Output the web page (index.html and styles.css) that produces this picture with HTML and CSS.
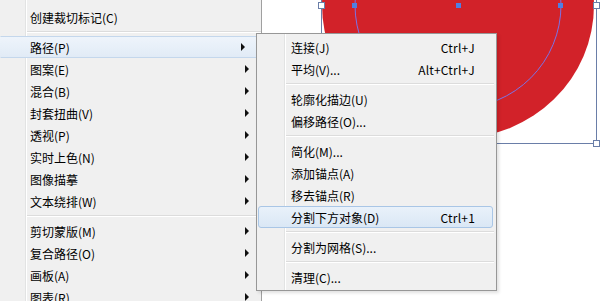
FILE: index.html
```html
<!DOCTYPE html>
<html lang="zh-CN">

<head>
    <meta charset="UTF-8">
    <meta name="viewport" content="width=device-width, initial-scale=1.0">
    <title>对象菜单</title>
    <link rel="stylesheet" href="styles.css">
</head>

<body>
    <svg class="artboard" width="600" height="301" viewBox="0 0 600 301">
        <ellipse cx="458" cy="5" rx="136" ry="133" fill="#d22229" />
        <circle cx="458" cy="5" r="103" fill="none" stroke="#7b73e6" stroke-width="1" />
        <rect x="321.5" y="-140" width="275" height="283.5" fill="none" stroke="#6a7ea8" stroke-width="1" />
        <rect x="318.5" y="2.5" width="6" height="6" fill="#fff" stroke="#6a7ea8" />
        <rect x="593.5" y="2.5" width="6" height="6" fill="#fff" stroke="#6a7ea8" />
        <rect x="593.5" y="140.5" width="6" height="6" fill="#fff" stroke="#6a7ea8" />
        <rect x="352" y="3" width="5" height="5" fill="#4f7fe3" />
        <rect x="456" y="3" width="5" height="5" fill="#4f7fe3" />
        <rect x="558" y="3" width="5" height="5" fill="#4f7fe3" />
    </svg>

    <div class="menu main-menu">
        <div class="item"><span>创建裁切标记(C)</span></div>
        <div class="sep"></div>
        <div class="item hover"><span>路径(P)</span><i class="arrow"></i></div>
        <div class="item"><span>图案(E)</span><i class="arrow"></i></div>
        <div class="item"><span>混合(B)</span><i class="arrow"></i></div>
        <div class="item"><span>封套扭曲(V)</span><i class="arrow"></i></div>
        <div class="item"><span>透视(P)</span><i class="arrow"></i></div>
        <div class="item"><span>实时上色(N)</span><i class="arrow"></i></div>
        <div class="item"><span>图像描摹</span><i class="arrow"></i></div>
        <div class="item"><span>文本绕排(W)</span><i class="arrow"></i></div>
        <div class="sep"></div>
        <div class="item"><span>剪切蒙版(M)</span><i class="arrow"></i></div>
        <div class="item"><span>复合路径(O)</span><i class="arrow"></i></div>
        <div class="item"><span>画板(A)</span><i class="arrow"></i></div>
        <div class="item"><span>图表(R)</span><i class="arrow"></i></div>
    </div>

    <div class="menu sub-menu">
        <div class="item"><span>连接(J)</span><span class="key">Ctrl+J</span></div>
        <div class="item"><span>平均(V)...</span><span class="key">Alt+Ctrl+J</span></div>
        <div class="sep"></div>
        <div class="item"><span>轮廓化描边(U)</span></div>
        <div class="item"><span>偏移路径(O)...</span></div>
        <div class="sep"></div>
        <div class="item"><span>简化(M)...</span></div>
        <div class="item"><span>添加锚点(A)</span></div>
        <div class="item"><span>移去锚点(R)</span></div>
        <div class="item active"><span>分割下方对象(D)</span><span class="key">Ctrl+1</span></div>
        <div class="sep"></div>
        <div class="item"><span>分割为网格(S)...</span></div>
        <div class="sep"></div>
        <div class="item"><span>清理(C)...</span></div>
    </div>
</body>

</html>
```

FILE: styles.css
```css
* {
    box-sizing: border-box;
}

body {
    margin: 0;
    width: 600px;
    height: 301px;
    overflow: hidden;
    position: relative;
    background-color: #ffffff;
    font-family: "Noto Sans CJK SC", "Noto Sans", sans-serif;
    font-size: 12px;
    color: #000000;
}

.artboard {
    position: absolute;
    left: 0;
    top: 0;
}

.menu {
    position: absolute;
    display: flex;
    flex-direction: column;
    background-color: #f0f0f0;
}

.main-menu {
    left: 0;
    top: 0;
    width: 262px;
    height: 301px;
    padding-top: 6px;
    border-right: 1px solid #a0a0a0;
    background: linear-gradient(to right, transparent 25px, #e2e3e3 25px, #e2e3e3 26px, #ffffff 26px, #ffffff 27px, transparent 27px), #f0f0f0;
}

.sub-menu {
    left: 256px;
    top: 33px;
    width: 241px;
    padding: 2px 0;
    border: 1px solid #979797;
    background: linear-gradient(to right, transparent 27px, #e2e3e3 27px, #e2e3e3 28px, #ffffff 28px, #ffffff 29px, transparent 29px), #f0f0f0;
    box-shadow: 2px 2px 3px rgba(0, 0, 0, 0.12);
}

.item {
    display: flex;
    align-items: center;
    height: 22px;
    flex-shrink: 0;
    border: 1px solid transparent;
}

.main-menu .item {
    padding-left: 29px;
    padding-right: 11px;
}

.sub-menu .item {
    margin: 0 3px 0 1px;
    padding-left: 32px;
    padding-right: 17px;
}

.key {
    margin-left: auto;
    letter-spacing: 0.2px;
}

.arrow {
    margin-left: auto;
    width: 0;
    height: 0;
    border-left: 4px solid #101010;
    border-top: 4px solid transparent;
    border-bottom: 4px solid transparent;
}

.sep {
    height: 8px;
    flex-shrink: 0;
    margin-left: 27px;
    background: linear-gradient(to bottom, transparent 3px, #dcdcdc 3px, #dcdcdc 4px, #ffffff 4px, #ffffff 5px, transparent 5px);
}

.sub-menu .sep {
    margin-left: 29px;
    margin-right: 2px;
}

.main-menu .hover {
    margin-right: 4px;
    border-color: #c4d7ec transparent;
    background: linear-gradient(to bottom, #eef4fb, #e1ebf6);
}

.sub-menu .active {
    border-radius: 3px;
    border-color: #a9c6e6;
    background: linear-gradient(to bottom, #e9f1fa, #dae7f5);
}
```
